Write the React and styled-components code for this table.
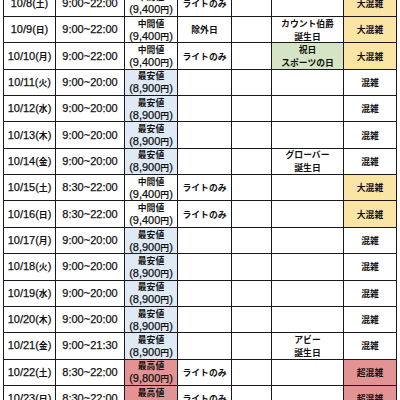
import React from 'react';
import styled, { createGlobalStyle } from 'styled-components';

const GlobalStyle = createGlobalStyle`
  html, body {
    margin: 0;
    padding: 0;
    background: #fff;
  }
`;

const PRICES = {
  mid: { label: '中間値', amount: '(9,400円)', bg: '#fff' },
  low: { label: '最安値', amount: '(8,900円)', bg: '#dfeaf6' },
  high: { label: '最高値', amount: '(9,800円)', bg: '#e39393' },
};

const CROWD = {
  混雑: '#fff',
  大混雑: '#fae5a4',
  超混雑: '#e39393',
};

const rows = [
  ['10/8(土)', '9:00~22:00', 'mid', 'ライトのみ', '', '', '大混雑'],
  ['10/9(日)', '9:00~22:00', 'mid', '除外日', 'カウント伯爵\n誕生日', '', '大混雑'],
  ['10/10(月)', '9:00~22:00', 'mid', 'ライトのみ', '祝日\nスポーツの日', 'holiday', '大混雑'],
  ['10/11(火)', '9:00~20:00', 'low', '', '', '', '混雑'],
  ['10/12(水)', '9:00~20:00', 'low', '', '', '', '混雑'],
  ['10/13(木)', '9:00~20:00', 'low', '', '', '', '混雑'],
  ['10/14(金)', '9:00~20:00', 'low', '', 'グローバー\n誕生日', '', '混雑'],
  ['10/15(土)', '8:30~22:00', 'mid', 'ライトのみ', '', '', '大混雑'],
  ['10/16(日)', '8:30~22:00', 'mid', 'ライトのみ', '', '', '大混雑'],
  ['10/17(月)', '9:00~20:00', 'low', '', '', '', '混雑'],
  ['10/18(火)', '9:00~20:00', 'low', '', '', '', '混雑'],
  ['10/19(水)', '9:00~20:00', 'low', '', '', '', '混雑'],
  ['10/20(木)', '9:00~20:00', 'low', '', '', '', '混雑'],
  ['10/21(金)', '9:00~21:30', 'low', '', 'アビー\n誕生日', '', '混雑'],
  ['10/22(土)', '8:30~22:00', 'high', 'ライトのみ', '', '', '超混雑'],
  ['10/23(日)', '8:30~22:00', 'high', 'ライトのみ', '', '', '超混雑'],
];

const Viewport = styled.div`
  height: 400px;
  overflow: hidden;
  background: #fff;
`;

const Sheet = styled.div`
  display: grid;
  grid-template-columns: 52px 69px 53px 54px 40px 72px 53px;
  grid-auto-rows: 26.36px;
  width: 394px;
  margin: -9.4px 0 0 3px;
  border-left: 1px solid #1a1a1a;
  font-family: 'Liberation Sans', Arial, 'Noto Sans CJK JP', sans-serif;
  font-size: 11px;
  color: #111;
`;

const Cell = styled.div`
  box-sizing: border-box;
  display: flex;
  flex-direction: column;
  align-items: center;
  justify-content: center;
  line-height: 13px;
  text-align: center;
  white-space: nowrap;
  border-right: 1px solid #1a1a1a;
  border-bottom: 1px solid #1a1a1a;
  background: ${(p) => p.$bg || '#fff'};
`;

const Line = styled.span`
  display: block;
  -webkit-text-stroke: 0.25px #111;
`;

const Jp = styled.span`
  font-family: 'Noto Sans CJK JP', sans-serif;
  font-size: 8.8px;
  font-weight: 700;
  -webkit-text-stroke: 0;
`;

const CJK = /([\u3000-\u9fff\uff00-\uffef]+)/;

const mixed = (text) =>
  text
    .split(CJK)
    .filter(Boolean)
    .map((part, i) => (CJK.test(part) ? <Jp key={i}>{part}</Jp> : part));

const Lines = ({ text }) =>
  text.split('\n').map((line, i) => <Line key={i}>{mixed(line)}</Line>);

export default function App() {
  return (
    <Viewport>
      <GlobalStyle />
      <Sheet>
        {rows.map(([date, hours, price, light, event, eventTone, crowd]) => {
          const p = PRICES[price];
          return (
            <React.Fragment key={date}>
              <Cell>
                <Lines text={date} />
              </Cell>
              <Cell>
                <Lines text={hours} />
              </Cell>
              <Cell $bg={p.bg}>
                <Lines text={`${p.label}\n${p.amount}`} />
              </Cell>
              <Cell>{light && <Lines text={light} />}</Cell>
              <Cell />
              <Cell $bg={eventTone === 'holiday' ? '#d4e4c5' : undefined}>
                {event && <Lines text={event} />}
              </Cell>
              <Cell $bg={CROWD[crowd]}>
                <Lines text={crowd} />
              </Cell>
            </React.Fragment>
          );
        })}
      </Sheet>
    </Viewport>
  );
}
